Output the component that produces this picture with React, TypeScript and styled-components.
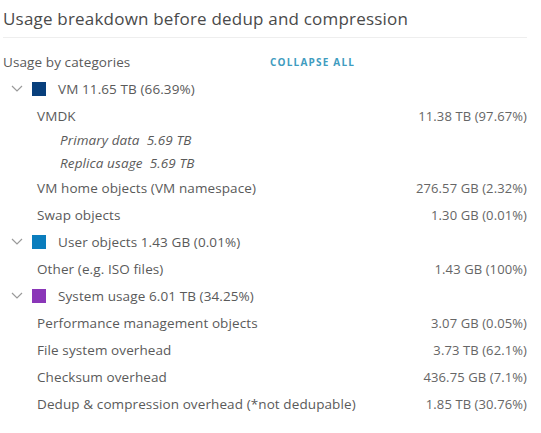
import styled, { createGlobalStyle } from "styled-components";

const GlobalStyle = createGlobalStyle`
  body {
    margin: 0;
    background: #fff;
    font-family: "Open Sans", "Noto Sans", sans-serif;
    color: #5a5a5a;
  }
`;

const Panel = styled.div`
  width: 541px;
  padding: 0 14px 0 3px;
  box-sizing: border-box;
`;

const Title = styled.h2`
  margin: 0;
  height: 37px;
  display: flex;
  align-items: center;
  font-size: 17px;
  font-weight: 400;
  letter-spacing: 0.2px;
  color: #4a4a4a;
  border-bottom: 1px solid #eeeeee;
`;

const HeaderRow = styled.div`
  margin-top: 10px;
  height: 27px;
  display: grid;
  grid-template-columns: 267px 1fr;
  align-items: center;
  font-size: 13.5px;
  letter-spacing: 0.1px;
`;

const CollapseButton = styled.button`
  justify-self: start;
  background: none;
  border: none;
  padding: 0;
  font-family: inherit;
  font-size: 10px;
  font-weight: 700;
  letter-spacing: 1.2px;
  color: #3f9cc0;
  cursor: pointer;
`;

const Row = styled.div<{ $indent: number; $short?: boolean }>`
  height: ${(p) => (p.$short ? "22.5px" : "27px")};
  display: flex;
  align-items: center;
  justify-content: space-between;
  padding-left: ${(p) => p.$indent}px;
  font-size: 13.5px;
  letter-spacing: 0.1px;
`;

const Label = styled.span<{ $italic?: boolean }>`
  display: flex;
  align-items: center;
  font-style: ${(p) => (p.$italic ? "italic" : "normal")};
  white-space: pre;
`;

const Value = styled.span`
  color: #666;
  font-size: 13px;
  letter-spacing: 0.1px;
  white-space: nowrap;
`;

const Toggle = styled.svg`
  width: 12px;
  height: 7px;
  margin-right: 9px;
`;

const Swatch = styled.span<{ $color: string }>`
  width: 14px;
  height: 14px;
  background: ${(p) => p.$color};
  margin-right: 12px;
`;

type Child = { label: string; value?: string; subs?: string[] };
type Category = { label: string; color: string; children: Child[] };

const categories: Category[] = [
  {
    label: "VM 11.65 TB (66.39%)",
    color: "#083f7c",
    children: [
      {
        label: "VMDK",
        value: "11.38 TB (97.67%)",
        subs: ["Primary data  5.69 TB", "Replica usage  5.69 TB"],
      },
      { label: "VM home objects (VM namespace)", value: "276.57 GB (2.32%)" },
      { label: "Swap objects", value: "1.30 GB (0.01%)" },
    ],
  },
  {
    label: "User objects 1.43 GB (0.01%)",
    color: "#0a7dbd",
    children: [{ label: "Other (e.g. ISO files)", value: "1.43 GB (100%)" }],
  },
  {
    label: "System usage 6.01 TB (34.25%)",
    color: "#8a36b8",
    children: [
      { label: "Performance management objects", value: "3.07 GB (0.05%)" },
      { label: "File system overhead", value: "3.73 TB (62.1%)" },
      { label: "Checksum overhead", value: "436.75 GB (7.1%)" },
      {
        label: "Dedup & compression overhead (*not dedupable)",
        value: "1.85 TB (30.76%)",
      },
    ],
  },
];

const Chevron = () => (
  <Toggle viewBox="0 0 12 7">
    <path d="M1 1 L6 6 L11 1" fill="none" stroke="#9a9a9a" strokeWidth="1.2" />
  </Toggle>
);

export default function App() {
  return (
    <Panel>
      <GlobalStyle />
      <Title>Usage breakdown before dedup and compression</Title>
      <HeaderRow>
        <span>Usage by categories</span>
        <CollapseButton>COLLAPSE ALL</CollapseButton>
      </HeaderRow>
      {categories.map((cat) => (
        <div key={cat.label}>
          <Row $indent={8}>
            <Label>
              <Chevron />
              <Swatch $color={cat.color} />
              {cat.label}
            </Label>
          </Row>
          {cat.children.map((child) => (
            <div key={child.label}>
              <Row $indent={34}>
                <Label>{child.label}</Label>
                {child.value && <Value>{child.value}</Value>}
              </Row>
              {child.subs?.map((s) => (
                <Row key={s} $indent={57} $short>
                  <Label $italic>{s}</Label>
                </Row>
              ))}
            </div>
          ))}
        </div>
      ))}
    </Panel>
  );
}
